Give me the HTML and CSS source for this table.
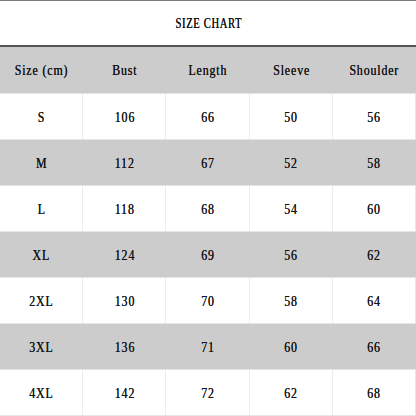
FILE: index.html
```html
<!DOCTYPE html>
<html>
<head>
<meta charset="utf-8">
<link rel="stylesheet" href="styles.css">
</head>
<body>
<div class="chart">
  <div class="title"><span class="t">SIZE CHART</span></div>
  <div class="row head">
    <div class="cell"><span class="t">Size (cm)</span></div><div class="cell"><span class="t">Bust</span></div><div class="cell"><span class="t">Length</span></div><div class="cell"><span class="t">Sleeve</span></div><div class="cell"><span class="t">Shoulder</span></div>
  </div>
  <div class="row">
    <div class="cell"><span class="t">S</span></div><div class="cell"><span class="t">106</span></div><div class="cell"><span class="t">66</span></div><div class="cell"><span class="t">50</span></div><div class="cell"><span class="t">56</span></div>
  </div>
  <div class="row alt">
    <div class="cell"><span class="t">M</span></div><div class="cell"><span class="t">112</span></div><div class="cell"><span class="t">67</span></div><div class="cell"><span class="t">52</span></div><div class="cell"><span class="t">58</span></div>
  </div>
  <div class="row">
    <div class="cell"><span class="t">L</span></div><div class="cell"><span class="t">118</span></div><div class="cell"><span class="t">68</span></div><div class="cell"><span class="t">54</span></div><div class="cell"><span class="t">60</span></div>
  </div>
  <div class="row alt">
    <div class="cell"><span class="t">XL</span></div><div class="cell"><span class="t">124</span></div><div class="cell"><span class="t">69</span></div><div class="cell"><span class="t">56</span></div><div class="cell"><span class="t">62</span></div>
  </div>
  <div class="row">
    <div class="cell"><span class="t">2XL</span></div><div class="cell"><span class="t">130</span></div><div class="cell"><span class="t">70</span></div><div class="cell"><span class="t">58</span></div><div class="cell"><span class="t">64</span></div>
  </div>
  <div class="row alt">
    <div class="cell"><span class="t">3XL</span></div><div class="cell"><span class="t">136</span></div><div class="cell"><span class="t">71</span></div><div class="cell"><span class="t">60</span></div><div class="cell"><span class="t">66</span></div>
  </div>
  <div class="row last">
    <div class="cell"><span class="t">4XL</span></div><div class="cell"><span class="t">142</span></div><div class="cell"><span class="t">72</span></div><div class="cell"><span class="t">62</span></div><div class="cell"><span class="t">68</span></div>
  </div>
</div>
</body>
</html>
```
FILE: styles.css
```css
html, body {
  margin: 0;
  padding: 0;
  background: #ffffff;
}
.chart {
  width: 416px;
  font-family: "Liberation Serif", serif;
  font-size: 14px;
  color: #151515;
}
.t {
  display: inline-block;
  transform: scaleX(0.85);
  letter-spacing: 1px;
  margin-right: -1px;
  text-shadow: 0 0 0.2px #151515;
  white-space: nowrap;
}
.title .t {
  transform: scaleX(0.76);
  letter-spacing: 0.8px;
  margin-right: -0.8px;
}
.title {
  border-top: 1px solid #7a7a7a;
  border-bottom: 2px solid #555555;
  display: flex;
  align-items: center;
  justify-content: center;
  padding-top: 2px;
  height: 42px;
}
.row {
  display: grid;
  grid-template-columns: repeat(5, 1fr);
  height: 46px;
  border-top: 1px solid #e6e6e6;
  box-sizing: border-box;
}
.row.head {
  background: #cccccc;
  border-top: none;
}
.row.alt {
  background: #cccccc;
}
.row.last {
  height: 47px;
  border-bottom: 1px solid #e6e6e6;
}
.cell {
  display: flex;
  align-items: center;
  justify-content: center;
  border-right: 1px solid #ececec;
  padding-top: 2px;
}
.row.head .cell,
.row.alt .cell {
  border-right-color: #cccccc;
}
.cell:last-child {
  border-right-color: #e6e6e6;
}
.row.head .cell:last-child,
.row.alt .cell:last-child {
  border-right-color: #cccccc;
}
```
